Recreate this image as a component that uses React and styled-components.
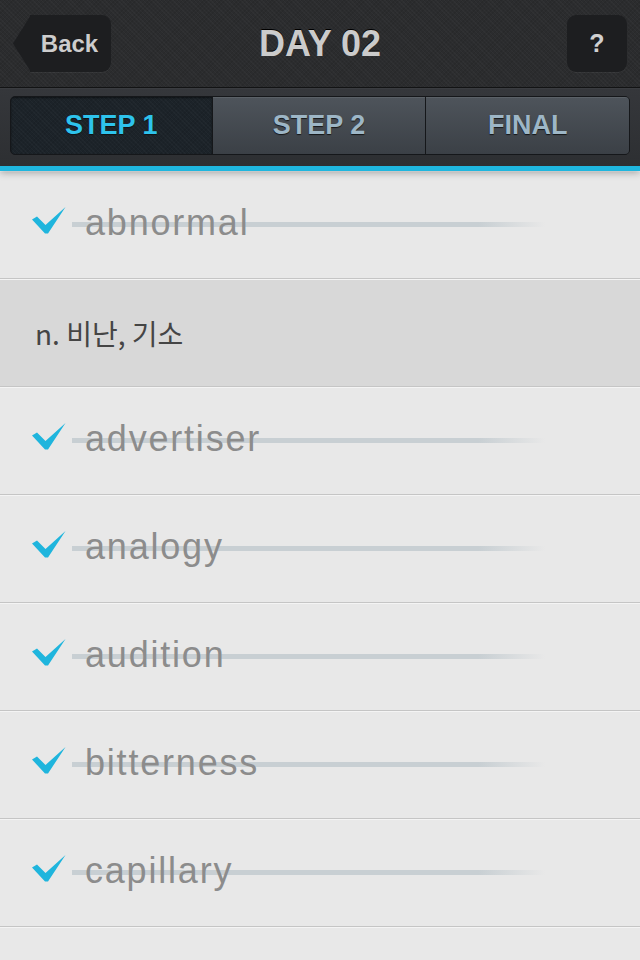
import React from 'react';
import styled, { createGlobalStyle } from 'styled-components';

const GlobalStyle = createGlobalStyle`
  html, body {
    margin: 0;
    padding: 0;
    background: #e8e8e8;
    overflow: hidden;
  }
  body {
    font-family: "Liberation Sans", Arial, sans-serif;
  }
`;

const Screen = styled.div`
  width: 640px;
  height: 960px;
  overflow: hidden;
  display: flex;
  flex-direction: column;
`;

const Top = styled.div`
  position: relative;
  z-index: 2;
  box-shadow: 0 2px 7px rgba(0, 0, 0, 0.28);
`;

const texture = `
  repeating-linear-gradient(45deg, rgba(255,255,255,0.025) 0 1px, transparent 1px 3px),
  repeating-linear-gradient(-45deg, rgba(0,0,0,0.08) 0 1px, transparent 1px 3px)
`;

const NavBar = styled.div`
  height: 87px;
  border-bottom: 1px solid #121314;
  background: ${texture}, #2b2c2e;
  display: grid;
  grid-template-columns: 1fr auto 1fr;
  align-items: center;
  padding: 0 13px;
`;

const BackButton = styled.div`
  justify-self: start;
  position: relative;
  margin-left: 17px;
  width: 81px;
  height: 57px;
  box-sizing: border-box;
  padding-right: 2px;
  background: #1d1e20;
  border-radius: 0 9px 9px 0;
  box-shadow: 0 1px 0 rgba(255,255,255,0.05);
  display: flex;
  align-items: center;
  justify-content: center;
  color: #cdcdcd;
  font-weight: bold;
  font-size: 24px;

  &::before {
    content: '';
    position: absolute;
    left: -17px;
    top: 0;
    width: 18px;
    height: 57px;
    background: #1d1e20;
    clip-path: polygon(100% 0, 0 50%, 100% 100%);
  }
`;

const Title = styled.div`
  color: #cbcbcb;
  font-weight: bold;
  font-size: 36px;
  text-shadow: 0 -1px 0 #000;
`;

const HelpButton = styled.div`
  justify-self: end;
  width: 60px;
  height: 57px;
  border-radius: 9px;
  background: #1d1e20;
  box-shadow: 0 1px 0 rgba(255,255,255,0.05);
  display: flex;
  align-items: center;
  justify-content: center;
  color: #d0d0d0;
  font-weight: bold;
  font-size: 25px;
`;

const SegmentBar = styled.div`
  height: 83px;
  box-sizing: border-box;
  padding: 7px 10px 11px;
  background: linear-gradient(#35373b, #2d2f32);
  border-top: 1px solid #3a3c40;
  border-bottom: 5px solid #1fb6de;
`;

const Segments = styled.div`
  display: grid;
  grid-template-columns: 201fr 213fr 203fr;
  gap: 1px;
  height: 59px;
  box-sizing: border-box;
  border: 1px solid #15171a;
  border-radius: 5px;
  background: #15171a;
  overflow: hidden;
`;

const Segment = styled.div`
  display: flex;
  align-items: center;
  justify-content: center;
  font-weight: bold;
  font-size: 27px;
  color: ${p => (p.$active ? '#2ec3ec' : '#9db6c6')};
  background: ${p =>
    p.$active
      ? `${texture}, #1c2329`
      : 'linear-gradient(#4e545b, #3b4046)'};
  box-shadow: ${p => (p.$active ? 'inset 0 1px 2px rgba(0,0,0,0.5)' : 'inset 0 1px 0 rgba(255,255,255,0.08)')};
  text-shadow: ${p => (p.$active ? '0 1px 1px rgba(0,0,0,0.5)' : '0 1px 1px rgba(0,0,0,0.7)')};
`;

const List = styled.div`
  display: flex;
  flex-direction: column;
`;

const Row = styled.div`
  flex: none;
  height: 107px;
  border-bottom: 1px solid #c5c5c5;
  box-shadow: inset 0 1px 0 #f4f4f4;
  background: ${p => (p.$meaning ? '#d8d8d8' : '#e8e8e8')};
  display: flex;
  align-items: center;
  padding-left: ${p => (p.$meaning ? '35px' : '32px')};
`;

const Check = styled.svg`
  flex: none;
  width: 34px;
  height: 27px;
  margin-bottom: 8px;
`;

const Word = styled.div`
  margin-left: 6px;
  width: 473px;
  height: 60px;
  box-sizing: border-box;
  padding: 0 0 4px 13px;
  display: flex;
  align-items: center;
  background: linear-gradient(to right, #c8cfd3 0%, #c8cfd3 86%, rgba(200,207,211,0) 100%) no-repeat left 50% / 100% 5px;
  color: #8c8c8c;
  font-size: 36px;
  letter-spacing: 1.8px;
  line-height: 36px;
`;

const Meaning = styled.div`
  font-family: "Noto Sans CJK KR", "Noto Sans", sans-serif;
  font-size: 28px;
  color: #454545;
`;

const CheckIcon = () => (
  <Check viewBox="0 0 34 27">
    <path d="M0 12.5 L5 9.5 L13.5 18 L33.5 0 L16 26.5 L13 26.5 Z" fill="#1fb5dd" />
  </Check>
);

const items = [
  { word: 'abnormal' },
  { meaning: 'n. 비난, 기소' },
  { word: 'advertiser' },
  { word: 'analogy' },
  { word: 'audition' },
  { word: 'bitterness' },
  { word: 'capillary' },
  { empty: true },
];

const App = () => (
  <Screen>
    <GlobalStyle />
    <Top>
      <NavBar>
        <BackButton>Back</BackButton>
        <Title>DAY 02</Title>
        <HelpButton>?</HelpButton>
      </NavBar>
      <SegmentBar>
        <Segments>
          <Segment $active>STEP 1</Segment>
          <Segment>STEP 2</Segment>
          <Segment>FINAL</Segment>
        </Segments>
      </SegmentBar>
    </Top>
    <List>
      {items.map((item, i) => {
        if (item.empty) return <Row key={i} />;
        if (item.meaning) {
          return (
            <Row key={i} $meaning>
              <Meaning>{item.meaning}</Meaning>
            </Row>
          );
        }
        return (
          <Row key={i}>
            <CheckIcon />
            <Word>{item.word}</Word>
          </Row>
        );
      })}
    </List>
  </Screen>
);

export default App;
